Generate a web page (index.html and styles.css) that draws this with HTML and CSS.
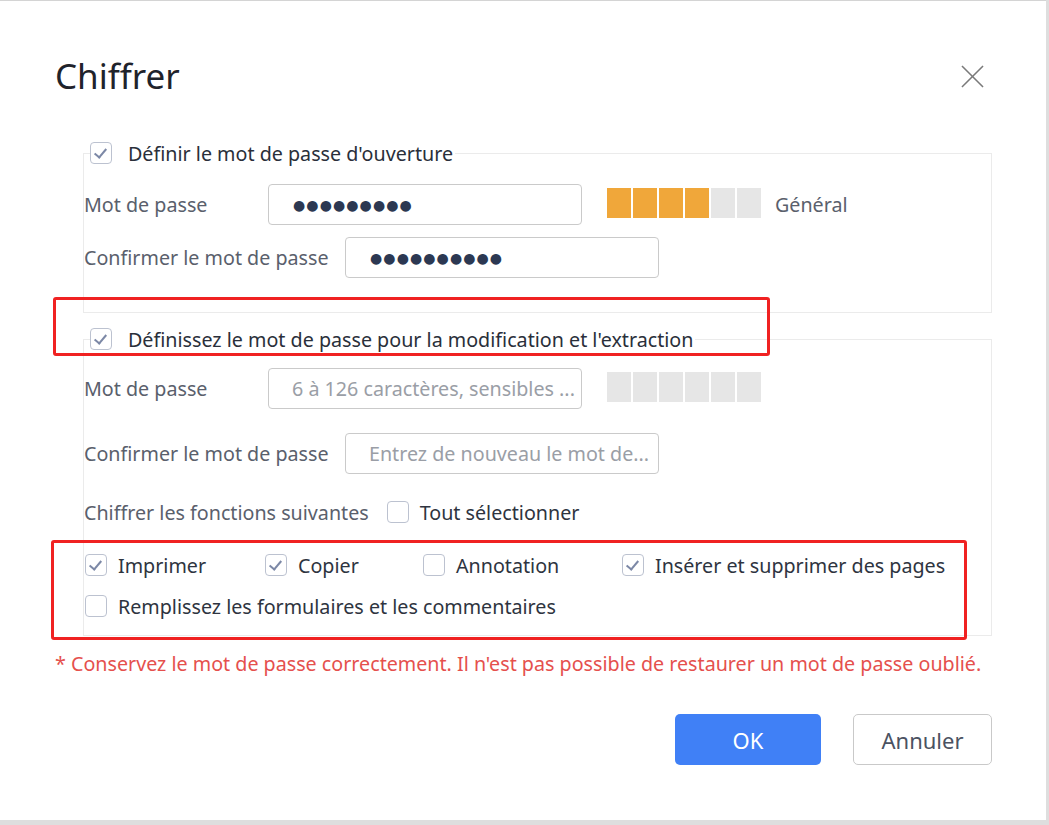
FILE: index.html
```html
<!DOCTYPE html>
<html lang="fr">

<head>
    <meta charset="UTF-8">
    <meta name="viewport" content="width=device-width, initial-scale=1.0">
    <title>Chiffrer</title>
    <link rel="stylesheet" href="styles.css">
</head>

<body>
    <div class="dialog">
        <div class="dialog-header">
            <h1>Chiffrer</h1>
            <button class="close-btn" aria-label="Fermer">
                <svg width="23" height="23" viewBox="0 0 24 24">
                    <path d="M1 1 L23 23 M23 1 L1 23" stroke="#7a7a7a" stroke-width="1.6" fill="none" />
                </svg>
            </button>
        </div>

        <!-- Mot de passe d'ouverture -->
        <fieldset class="group group-open">
            <legend>
                <span class="check checked"></span>
                <span class="legend-text">Définir le mot de passe d'ouverture</span>
            </legend>
            <div class="row">
                <span class="label label-short">Mot de passe</span>
                <div class="field dots">●●●●●●●●●</div>
                <div class="strength">
                    <span class="seg on"></span><span class="seg on"></span><span class="seg on"></span><span class="seg on"></span><span class="seg"></span><span class="seg"></span>
                </div>
                <span class="strength-text">Général</span>
            </div>
            <div class="row row-confirm">
                <span class="label label-long">Confirmer le mot de passe</span>
                <div class="field dots">●●●●●●●●●●</div>
            </div>
        </fieldset>

        <!-- Mot de passe de modification -->
        <fieldset class="group group-edit">
            <legend>
                <span class="check checked"></span>
                <span class="legend-text">Définissez le mot de passe pour la modification et l'extraction</span>
            </legend>
            <div class="row">
                <span class="label label-short">Mot de passe</span>
                <div class="field placeholder">6 à 126 caractères, sensibles ...</div>
                <div class="strength">
                    <span class="seg"></span><span class="seg"></span><span class="seg"></span><span class="seg"></span><span class="seg"></span><span class="seg"></span>
                </div>
            </div>
            <div class="row row-confirm2">
                <span class="label label-long">Confirmer le mot de passe</span>
                <div class="field placeholder">Entrez de nouveau le mot de...</div>
            </div>
            <div class="row-functions">
                <span class="label">Chiffrer les fonctions suivantes</span>
                <label class="option"><span class="check"></span>Tout sélectionner</label>
            </div>
            <div class="options">
                <label class="option opt-print"><span class="check checked"></span>Imprimer</label>
                <label class="option opt-copy"><span class="check checked"></span>Copier</label>
                <label class="option opt-annot"><span class="check"></span>Annotation</label>
                <label class="option"><span class="check checked"></span>Insérer et supprimer des pages</label>
            </div>
            <div class="options options-last">
                <label class="option"><span class="check"></span>Remplissez les formulaires et les commentaires</label>
            </div>
        </fieldset>

        <p class="note">* Conservez le mot de passe correctement. Il n'est pas possible de restaurer un mot de passe oublié.</p>

        <div class="actions">
            <button class="btn btn-ok">OK</button>
            <button class="btn btn-cancel">Annuler</button>
        </div>

        <!-- cadres rouges d'annotation -->
        <div class="mark mark-legend"></div>
        <div class="mark mark-options"></div>
    </div>
</body>

</html>
```

FILE: styles.css
```css
body {
    margin: 0;
    padding: 0;
    background-color: #dedede;
    font-family: 'Noto Sans', 'Open Sans', sans-serif;
    color: #2e3440;
}

.dialog {
    position: relative;
    box-sizing: border-box;
    width: 1046px;
    height: 820px;
    background-color: #fff;
    border-top: 1px solid #d4d4d4;
    padding: 0 54px 0 55px;
}

.dialog-header {
    display: flex;
    justify-content: space-between;
    align-items: center;
    padding-top: 52px;
    height: 46px;
}

h1 {
    margin: 0;
    font-size: 35px;
    font-weight: normal;
    line-height: 46px;
    color: #1f232b;
}

.close-btn {
    border: none;
    background: none;
    padding: 0;
    margin-right: 8px;
    width: 23px;
    height: 23px;
    cursor: pointer;
}

/* Groupes */
.group {
    margin: 0 0 0 28px;
    padding: 0;
    border: 1px solid #ebebeb;
    min-width: 0;
}

.group-open {
    margin-top: 41px;
    padding-bottom: 34px;
}

.group-edit {
    margin-top: 13px;
    padding-bottom: 16px;
}

legend {
    display: flex;
    align-items: center;
    padding: 0;
    margin-left: 6px;
    height: 26px;
}

.legend-text {
    margin-left: 16px;
    padding-right: 2px;
    font-size: 19.7px;
    color: #2a2f3a;
}

.row {
    display: flex;
    align-items: center;
    margin-top: 18px;
    height: 41px;
}

.row-confirm {
    margin-top: 12px;
}

.group-edit .row {
    margin-top: 16px;
}

.group-edit .row-confirm2 {
    margin-top: 24px;
}

.label {
    font-size: 19.7px;
    color: #5a606c;
    white-space: nowrap;
}

.label-short {
    width: 184px;
}

.label-long {
    width: 261px;
}

.field {
    box-sizing: border-box;
    width: 314px;
    height: 41px;
    border: 1px solid #cacaca;
    border-radius: 4px;
    padding-left: 24px;
    display: flex;
    align-items: center;
    white-space: nowrap;
    overflow: hidden;
}

.dots {
    font-family: 'DejaVu Sans', sans-serif;
    font-size: 14px;
    letter-spacing: 1.1px;
    color: #2c3852;
}

.placeholder {
    font-size: 19.7px;
    color: #9a9ea6;
    padding-left: 23px;
}

.strength {
    display: flex;
    gap: 2px;
    margin-left: 25px;
    margin-top: -4px;
}

.seg {
    width: 24px;
    height: 30px;
    background-color: #e6e6e6;
}

.seg.on {
    background-color: #f0a73a;
}

.strength-text {
    margin-left: 14px;
    font-size: 19.7px;
    color: #5a606c;
}

.row-functions {
    display: flex;
    align-items: center;
    margin-top: 25px;
    height: 26px;
    gap: 18px;
}

.options {
    display: flex;
    align-items: center;
    margin-top: 27px;
    height: 26px;
    padding-left: 1px;
}

.options-last {
    margin-top: 15px;
}

.opt-print {
    width: 180px;
}

.opt-copy {
    width: 158px;
}

.opt-annot {
    width: 199px;
}

.option {
    display: flex;
    align-items: center;
    gap: 11px;
    font-size: 19.7px;
    color: #2e3440;
    white-space: nowrap;
}

/* Cases à cocher */
.check {
    box-sizing: border-box;
    display: inline-block;
    flex: none;
    width: 22px;
    height: 22px;
    border: 1.5px solid #bcc2d0;
    border-radius: 4px;
    background-color: #fff;
    position: relative;
}

.check.checked::after {
    content: '';
    position: absolute;
    left: 6px;
    top: 3px;
    width: 5px;
    height: 10px;
    border-right: 2px solid #7c88a6;
    border-bottom: 2px solid #7c88a6;
    transform: rotate(40deg);
}

.note {
    margin: 15px 0 0 0;
    font-size: 19.7px;
    line-height: 26px;
    color: #e5504d;
    white-space: nowrap;
}

.actions {
    display: flex;
    justify-content: flex-end;
    gap: 32px;
    margin-top: 37px;
}

.btn {
    height: 51px;
    border-radius: 5px;
    font-family: 'Noto Sans', 'Open Sans', sans-serif;
    font-size: 22px;
    cursor: pointer;
}

.btn-ok {
    width: 146px;
    border: none;
    background-color: #4080f6;
    color: #fff;
}

.btn-cancel {
    width: 139px;
    border: 1px solid #c9c9c9;
    background-color: #fff;
    color: #4b5262;
}

/* Annotations */
.mark {
    position: absolute;
    border: 3px solid #f02222;
    border-radius: 3px;
    box-sizing: border-box;
}

.mark-legend {
    left: 53px;
    top: 296px;
    width: 717px;
    height: 59px;
}

.mark-options {
    left: 51px;
    top: 539px;
    width: 916px;
    height: 100px;
}
```
